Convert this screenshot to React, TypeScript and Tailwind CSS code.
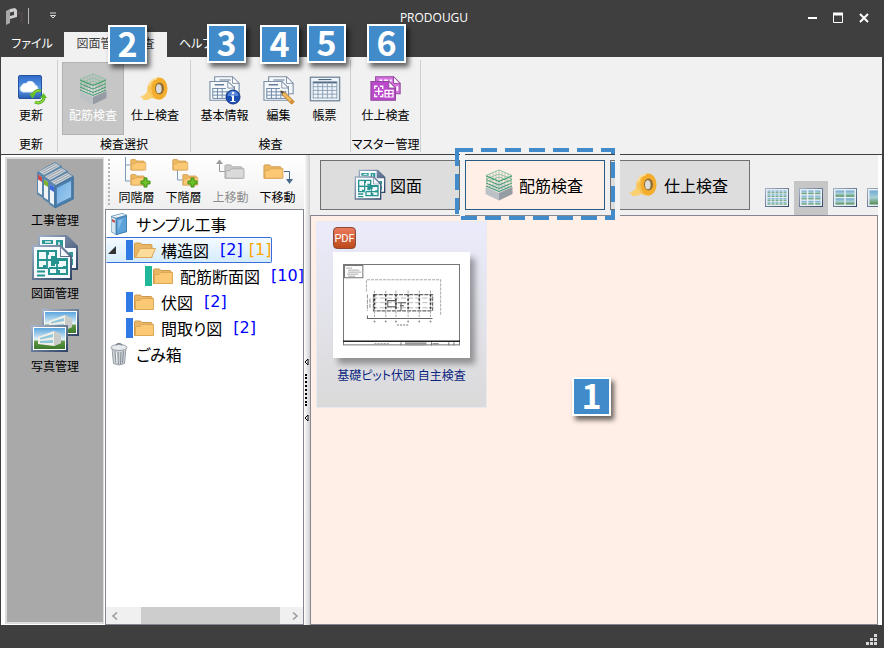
import { useState } from 'react';
import type { ReactNode } from 'react';

type IconProps = { className?: string };

function LogoIcon() {
    return (
        <svg className="w-5 h-5" viewBox="0 0 20 20" aria-hidden="true">
            <path d="M2 5 L6 3 V17 L2 19 Z" fill="#a9a9a9" />
            <path d="M6 3 L11 2 L13 4 V11 L6 13 V10 L10 9 V5.500 L6 6.500 Z" fill="#cfcfcf" />
            <path d="M13 5 L19 6 V18 L16 16 V9 L13 9 Z" fill="#4c4546" />
        </svg>
    );
}

function CloudIcon({ className }: IconProps) {
    return (
        <svg className={className} viewBox="0 0 32 32" aria-hidden="true">
            <defs>
                <linearGradient id="cloudBg" x1="0" y1="0" x2="0" y2="1">
                    <stop offset="0" stopColor="#2f6bc8" />
                    <stop offset="0.6" stopColor="#5c9be6" />
                    <stop offset="1" stopColor="#2a5cb0" />
                </linearGradient>
            </defs>
            <rect x="3.500" y="2.500" width="23" height="23" rx="1.500" fill="url(#cloudBg)" stroke="#2653a0" />
            <path d="M8 19 a3.500 3.500 0 0 1 -1 -6.500 a3.500 3.500 0 0 1 4 -2 a5 5 0 0 1 9 1.500 a3.800 3.800 0 0 1 1 7 Z" fill="#fff" stroke="#dbe8f8" />
            <path d="M18 22 a6 6 0 0 1 8 -4" fill="none" stroke="#3f9b1e" strokeWidth="3" />
            <path d="M18 22 a6 6 0 0 1 8 -4" fill="none" stroke="#8ed63c" strokeWidth="1.800" />
            <path d="M14 20.500 h7 l-3.500 5 Z" fill="#63bd2a" />
            <path d="M29 23 a6 6 0 0 1 -9 6" fill="none" stroke="#3f9b1e" strokeWidth="3" />
            <path d="M29 23 a6 6 0 0 1 -9 6" fill="none" stroke="#8ed63c" strokeWidth="1.800" />
            <path d="M25 25 h7 l-3.500 -5 Z" fill="#63bd2a" />
        </svg>
    );
}

function RebarIcon({ className }: IconProps) {
    return (
        <svg className={className} viewBox="-1 0 32 32" aria-hidden="true">
            <path d="M1.500 18 L15 12 L28.500 18 L15 24 Z" fill="#d8dcdf" />
            <path d="M1.500 18 L15 24 V31.500 L1.500 25 Z" fill="#bcc1c6" />
            <path d="M28.500 18 L15 24 V31.500 L28.500 25 Z" fill="#969ca3" />
            <path d="M3 6V18M6 5V19M9 3V20M12 2V21M15 1V22M18 2V21M21 3V20M24 5V19M27 6V18" fill="none" stroke="#9dafa6" strokeWidth="0.700" />
            <g fill="none" stroke="#3f9a66" strokeWidth="1">
                <path d="M2 6.500 L15 1 L28 6.500 L15 12 Z" stroke="#8fc3a5" />
                <path d="M2 10.500 L15 16 L28 10.500 M2 14 L15 19.500 L28 14 M2 17 L15 22.500 L28 17" />
                <path d="M2 10 L15 5 L28 10 M2 13 L15 8 L28 13" stroke="#8fc3a5" />
                <path d="M2 7 L15 12.500 L28 7" />
            </g>
        </svg>
    );
}

function TapeIcon({ className }: IconProps) {
    return (
        <svg className={className} viewBox="0 -2 32 32" aria-hidden="true">
            <path d="M9 10 C9 17 7 20 0.500 22 L4 23 L3.500 25 C10 25.500 14 23 16 20 Z" fill="#f9cf70" />
            <path d="M8.500 15 C8 7 13 3 20 2.500 L22 24.500 C17 25 13 24 12 20 Z" fill="#f8c458" />
            <ellipse cx="20.500" cy="13.500" rx="8" ry="11" fill="#f2ae2c" />
            <ellipse cx="20.500" cy="13.500" rx="4.500" ry="6" fill="#8f6c36" />
            <ellipse cx="19.800" cy="13.800" rx="2.800" ry="4.500" fill="#dcdcd8" />
            <path d="M10 11 C11 6 14 4 18 3.500" fill="none" stroke="#fbe0a0" strokeWidth="1.500" />
        </svg>
    );
}

// Outline of one page with its top right corner folded down
function Page({ x, y, w, h, fold, fill, stroke }: { x: number; y: number; w: number; h: number; fold: number; fill: string; stroke: string }) {
    return (
        <g>
            <path d={`M${x} ${y} H${x + w - fold} L${x + w} ${y + fold} V${y + h} H${x} Z`} fill={fill} stroke={stroke} strokeWidth="1.200" />
            <path d={`M${x + w - fold} ${y} V${y + fold} H${x + w} Z`} fill="#fff" stroke={stroke} />
        </g>
    );
}

function SheetsIcon({ className }: IconProps) {
    return (
        <svg className={className} viewBox="0 0 34 32" aria-hidden="true">
            <Page x={6} y={3} w={26} h={18} fold={7} fill="#f6f9fc" stroke="#7e90a6" />
            <path d="M11 6.500 H23 M27 13 V19" stroke="#5c7590" strokeWidth="1.200" />
            <Page x={1} y={8} w={26} h={20} fold={7} fill="#f6f9fc" stroke="#7e90a6" />
            <path d="M6 11.500 H16" stroke="#5c7590" strokeWidth="1.500" />
            <path d="M4 15.500H18M4 19H24M4 22.500H24M4 26H24M4 15V26M9 15V26M14 15V26M19 18V26M24 18V26" stroke="#6b86a4" fill="none" />
        </svg>
    );
}

function InfoSheetsIcon({ className }: IconProps) {
    return (
        <span className={`relative block ${className}`}>
            <SheetsIcon className="w-full h-full" />
            <svg className="absolute right-0 bottom-0 w-4 h-4" viewBox="0 0 16 16" aria-hidden="true">
                <circle cx="8" cy="8" r="7" fill="#1c4fb4" stroke="#12388a" />
                <path d="M2.500 7 a5.500 5 0 0 1 11 0 Z" fill="#5585d6" />
                <path d="M6 6.500 H9 V12 H10.500 V13 H5.500 V12 H7 V7.500 H6 Z" fill="#fff" />
                <circle cx="8" cy="4" r="1.300" fill="#fff" />
            </svg>
        </span>
    );
}

function EditSheetsIcon({ className }: IconProps) {
    return (
        <span className={`relative block ${className}`}>
            <SheetsIcon className="w-full h-full" />
            <svg className="absolute right-0 bottom-0 w-4 h-4" viewBox="0 0 16 16" aria-hidden="true">
                <path d="M2 2 L6 3.500 L15 12.500 L12.500 15 L3.500 6 Z" fill="#f2b95a" stroke="#b07d2e" />
                <path d="M1.500 1.500 L5 3 L3 5 Z" fill="#3d4650" />
                <path d="M13 10.500 L15.500 13 L13 15.500 L10.500 13 Z" fill="#d68f3a" />
            </svg>
        </span>
    );
}

function TableIcon({ className }: IconProps) {
    return (
        <svg className={className} viewBox="0 0 34 32" aria-hidden="true">
            <rect x="1.500" y="3.500" width="31" height="25" fill="#eef4f9" stroke="#7b8da1" strokeWidth="1.500" />
            <path d="M10 6 H24" stroke="#34506e" />
            <path d="M4 9 H30" stroke="#4e6883" strokeWidth="2" />
            <path d="M4 13.500H30M4 17.500H30M4 21.500H30M4 25.500H30M4.500 9V26M9.500 9V26M14.500 9V26M19.500 9V26M24.500 9V26M29.500 9V26" stroke="#8b9fb5" fill="none" />
        </svg>
    );
}

function MasterIcon({ className }: IconProps) {
    return (
        <svg className={className} viewBox="0 0 34 32" aria-hidden="true">
            <Page x={6} y={3} w={26} h={18} fold={7} fill="#d673e0" stroke="#93479f" />
            <path d="M10 7H13M15 7H19M21 7H23" stroke="#fff" strokeWidth="2" />
            <path d="M29 13V18" stroke="#fff" strokeWidth="2" />
            <Page x={1} y={8} w={26} h={20} fold={7} fill="#bb49cb" stroke="#93479f" />
            <path d="M8 13H5V16M10.500 13H13.500V16M5 21V24H8M13.500 21V24H10.500M9.250 14.500V22.500M5 18.500H13.500" stroke="#fff" strokeWidth="1.500" fill="none" />
            <path d="M16 17.500H24.500V24.500H16ZM16 21H24.500M20 17.500V24.500" stroke="#fff" strokeWidth="1.300" fill="none" />
        </svg>
    );
}

function BooksIcon({ className }: IconProps) {
    const books = [
        { x: 0, y: 0, label: '#c94a4a' },
        { x: 6, y: 5, label: '#7fb02e' },
        { x: 12, y: 10, label: '#3b66e0' },
    ];
    return (
        <svg className={className} viewBox="0 0 48 48" aria-hidden="true">
            <defs>
                <linearGradient id="bookCover" x1="0" y1="0" x2="1" y2="1">
                    <stop offset="0" stopColor="#6fb0e6" />
                    <stop offset="1" stopColor="#a3cbee" />
                </linearGradient>
            </defs>
            {books.map((b) => (
                <g key={b.x} transform={`translate(${b.x} ${b.y})`}>
                    <path d="M6 11 L24 1 L31 5 V28 L12 37 L6 33 Z" fill="#5f88a8" />
                    <path d="M8 10.500 L24 2 L29 5 L13 14 Z" fill="#cfd4d9" />
                    <path d="M10 11 L25 3 M12 12.500 L27 4.500" stroke="#98a2ac" />
                    <path d="M6 11 L12 14.500 V37 L6 33 Z" fill="#5a86ab" />
                    <path d="M7 13.500 L11 16 V34 L7 31.500 Z" fill="#eef3f7" />
                    <path d="M7 13.500 L11 16 V21 L7 18.500 Z" fill={b.label} />
                </g>
            ))}
            <path d="M24 25 L42 16 V38 L24 47 Z" fill="#4d80ae" stroke="#42719b" />
            <path d="M26 27 L40 20 V36 L26 43 Z" fill="url(#bookCover)" />
        </svg>
    );
}

function DrawingIcon({ className }: IconProps) {
    return (
        <svg className={className} viewBox="0 0 48 48" aria-hidden="true">
            <defs>
                <linearGradient id="drawEdge" x1="0" y1="0" x2="1" y2="1">
                    <stop offset="0" stopColor="#9fb0c6" />
                    <stop offset="1" stopColor="#2c4164" />
                </linearGradient>
            </defs>
            <path d="M7 1 H36 L47 12 V36 H7 Z" fill="url(#drawEdge)" />
            <path d="M9 3 H34 V14 H45 V34 H9 Z" fill="#f6fafc" />
            <path d="M11 6H22V10H11ZM25 6H32V13H25ZM38 18H42V31H38Z" fill="#2e9a98" />
            <path d="M14 8H20M28 8V12M38 24H42" stroke="#e8f6f6" strokeWidth="1.500" />
            <path d="M1 11 H30 L41 22 V46 H1 Z" fill="url(#drawEdge)" />
            <path d="M3 13 H29 V23 H39 V44 H3 Z" fill="#f6fafc" />
            <path d="M30 14 V22 H38 Z" fill="#f6fafc" />
            <path d="M6 16H26V24H37V41H17V35H6Z" fill="#279391" />
            <path d="M8 18H15V21H18V18H24V22H20V25H24V27H20V32H24V30H28V27H35V32H32V35H35V39H29V36H26V39H19V34H15V31H12V33H8V27H14V25H8Z" fill="#f1fafa" />
            <path d="M16 17V34M7 26H36M26 25V40M18 34H36" stroke="#279391" strokeWidth="1.800" />
            <path d="M6 37.500H14M6 41.500H14" stroke="#279391" strokeWidth="2" />
        </svg>
    );
}

function PhotoIcon({ className }: IconProps) {
    return (
        <svg className={className} viewBox="0 0 48 48" aria-hidden="true">
            <defs>
                <linearGradient id="photoView" x1="0" y1="0" x2="0" y2="1">
                    <stop offset="0" stopColor="#5aa5dd" />
                    <stop offset="0.550" stopColor="#e3f1f8" />
                    <stop offset="0.650" stopColor="#5f9442" />
                    <stop offset="1" stopColor="#3d7a2c" />
                </linearGradient>
                <linearGradient id="photoEdge" x1="0" y1="0" x2="1" y2="1">
                    <stop offset="0" stopColor="#a9b8cc" />
                    <stop offset="1" stopColor="#2b4163" />
                </linearGradient>
            </defs>
            {[{ x: 11, y: 2 }, { x: 0, y: 18 }].map((p) => (
                <g key={p.x} transform={`translate(${p.x} ${p.y})`}>
                    <rect width="37" height="27" fill="url(#photoEdge)" />
                    <rect x="2" y="2" width="33" height="23" fill="#fff" />
                    <rect x="3" y="3" width="31" height="21" fill="url(#photoView)" />
                    <path d="M7 12 L23 6 L30 10 V18 L23 21 L7 19 Z" fill="#efefe6" />
                    <path d="M9 13 L22 9 V12 L9 14.500 Z M9 16 L22 15 V18 L9 18 Z" fill="#8ec6dd" />
                    <path d="M23 6 L30 10 V18 L23 21 Z" fill="#c9cbc9" />
                </g>
            ))}
        </svg>
    );
}

function FolderIcon({ className, open }: IconProps & { open?: boolean }) {
    return (
        <svg className={className} viewBox="0 0 24 20" aria-hidden="true">
            <path d="M1.500 17.500 V4 Q1.500 3 3 3 H7.500 L9 4.500 H18 Q19 4.500 19 6 V17.500 Z" fill="#e9b666" stroke="#cf9a4c" />
            {open ? (
                <path d="M2.500 17.500 L7 8.500 H22.500 L18.500 17.500 Z" fill="#fddb9b" stroke="#dca759" />
            ) : (
                <path d="M2.500 17.500 V8.500 H7 L9 6.500 H20.500 V17.500 Z" fill="#fbc974" stroke="#dca759" />
            )}
        </svg>
    );
}

function BookIcon({ className }: IconProps) {
    return (
        <svg className={className} viewBox="0 0 18 24" aria-hidden="true">
            <path d="M1 4 L12 1 L17 3 V20 L6 23 L1 20 Z" fill="#5b91bb" />
            <path d="M2 4.500 L12 1.800 L15.500 3 L6 5.800 Z" fill="#eef2f5" />
            <path d="M1.500 5 L5.500 7 V22 L1.500 19.500 Z" fill="#dbe7f0" />
            <path d="M2 7 L5 8.500 V11 L2 9.500 Z" fill="#c65353" />
            <path d="M6.500 7 L16.500 4 V19.500 L6.500 22.500 Z" fill="#5da3da" stroke="#4280b0" />
            <path d="M8 8.500 L13 7 L8 18 Z" fill="#84bce8" />
        </svg>
    );
}

function TrashIcon({ className }: IconProps) {
    return (
        <svg className={className} viewBox="0 0 18 24" aria-hidden="true">
            <path d="M2 6 L3.500 21.500 Q9 24.500 14.500 21.500 L16 6 Z" fill="#cdd2d7" stroke="#98a0a8" />
            <path d="M5 9L6 21M8 10L8.300 22M11 10L10.500 22M13.500 9L12.500 21" stroke="#848d96" />
            <path d="M6.300 10L7 21" stroke="#f4f6f8" />
            <ellipse cx="9" cy="5.500" rx="8" ry="3" fill="#e8ebee" stroke="#98a0a8" />
            <path d="M6 3 Q9 0 12 3" fill="none" stroke="#7e8790" strokeWidth="1.500" />
        </svg>
    );
}

// Folder pictures of the tree toolbar; the lines tell where the new or moved folder goes
function LevelIcon({ kind }: { kind: 'same' | 'child' | 'up' | 'down' }) {
    const folder = (x: number, y: number, s: number, muted = false) => (
        <g transform={`translate(${x} ${y}) scale(${s})`}>
            <path d="M1 16 V3 Q1 2 2 2 H7 L9 4 H18 Q19 4 19 5 V16 Z" fill={muted ? '#c9c9c9' : '#edb75f'} stroke={muted ? '#adadad' : '#cf9a4c'} />
            <path d="M2 16 V8 H6 L8 6 H21 V16 Z" fill={muted ? '#dadada' : '#fbc974'} stroke={muted ? '#adadad' : '#dca759'} />
        </g>
    );
    const plus = <path d="M20 24 H23 V21 H26 V24 H29 V27 H26 V30 H23 V27 H20 Z" fill="#6cc227" stroke="#3d8f17" />;
    return (
        <svg className="w-8 h-8" viewBox="0 0 32 32" aria-hidden="true">
            {kind === 'same' && (
                <>
                    <path d="M4.500 0 V24 H9 M4.500 8 H9" fill="none" stroke="#7b9cbd" />
                    {folder(9, 1, 0.750)}
                    {folder(9, 16, 0.750)}
                    {plus}
                </>
            )}
            {kind === 'child' && (
                <>
                    <path d="M9.500 13 V23 H14" fill="none" stroke="#7b9cbd" />
                    {folder(4, 1, 0.750)}
                    {folder(14, 16, 0.750)}
                    {plus}
                </>
            )}
            {kind === 'up' && (
                <>
                    <path d="M10 14.500 H4.500 V5" fill="none" stroke="#9a9a9a" />
                    <path d="M1 7 L4.500 2.500 L8 7 Z" fill="#9a9a9a" />
                    {folder(9, 6, 0.950, true)}
                </>
            )}
            {kind === 'down' && (
                <>
                    {folder(1, 6, 0.950)}
                    <path d="M22 14.500 H27.500 V24" fill="none" stroke="#46698c" />
                    <path d="M24 22 L27.500 27 L31 22 Z" fill="#46698c" />
                </>
            )}
        </svg>
    );
}

function ViewIcon({ cols, rows }: { cols: number; rows: number }) {
    const gap = cols > 3 ? 1 : 1.5;
    const w = (19 - (cols - 1) * gap) / cols;
    const h = (14 - (rows - 1) * gap) / rows;
    const cells = Array.from({ length: cols * rows }, (_, i) => ({
        x: 2.5 + (i % cols) * (w + gap),
        y: 2.5 + Math.floor(i / cols) * (h + gap),
    }));
    return (
        <svg className="w-6 h-5 shrink-0" viewBox="0 0 24 20" aria-hidden="true">
            <defs>
                <linearGradient id="viewEdge" x1="0" y1="0" x2="1" y2="1">
                    <stop offset="0" stopColor="#a5b3c6" />
                    <stop offset="1" stopColor="#33466a" />
                </linearGradient>
                <linearGradient id="viewCell" x1="0" y1="0" x2="0" y2="1">
                    <stop offset="0" stopColor="#6fa8d4" />
                    <stop offset="0.500" stopColor="#a8cfd6" />
                    <stop offset="1" stopColor="#4f8c50" />
                </linearGradient>
            </defs>
            <rect x="0" y="0" width="24" height="19" fill="url(#viewEdge)" />
            <rect x="1" y="1" width="22" height="17" fill="#e6edf3" />
            {cells.map(({ x, y }) => (
                <rect key={`${x}-${y}`} x={x} y={y} width={w} height={h} fill="url(#viewCell)" />
            ))}
        </svg>
    );
}

function PlanThumb() {
    const columns = [31, 42, 52, 64, 75, 86];
    return (
        <svg className="block w-full" viewBox="0 0 115 81" role="img" aria-label="基礎ピット伏図">
            <rect x="0.500" y="0.500" width="114" height="79" fill="#fff" stroke="#777" />
            <rect x="1.500" y="1.500" width="18" height="12" fill="#fff" stroke="#777" />
            <path d="M3 4H9M5 6H16M5 8H18M4 10H15M5 12H12" stroke="#999" strokeWidth="0.800" />
            <path d="M23 27 V15.500 H96 V50" fill="none" stroke="#aaa" strokeDasharray="3 1" />
            <rect x="30" y="30" width="58" height="16" fill="none" stroke="#666" strokeWidth="1.200" strokeDasharray="4 1" />
            <path d="M29 33.500H89M29 38H89M29 43H89" stroke="#aaa" strokeWidth="0.800" strokeDasharray="5 2" />
            {columns.map((x) => (
                <g key={x}>
                    <path d={`M${x} 26 V52`} stroke="#aaa" strokeDasharray="3 1" />
                    <path d={`M${x} 30 V46`} stroke="#333" strokeWidth="1.500" strokeDasharray="2 2" />
                    <circle cx={x} cy="56.500" r="0.900" fill="#888" />
                </g>
            ))}
            <path d="M44 36H52V42H44ZM54 38H62M56 41H60M57 38V46" stroke="#555" fill="none" />
            <path d="M24 30V46M26.500 34V44" stroke="#999" fill="none" strokeDasharray="4 1" />
            <path d="M24 50.500V53.500H88" stroke="#666" fill="none" />
            <path d="M53 60H65" stroke="#777" strokeDasharray="2 1" />
            <path d="M0 76H115" stroke="#222" strokeWidth="1.500" />
            <path d="M31 78.500H45" stroke="#888" strokeDasharray="2 1" />
            <rect x="61" y="77" width="21" height="3" fill="#999" />
            <path d="M57 77V80M87 77V80M104 77V80M109 77V80M88 78.500H94" stroke="#777" />
        </svg>
    );
}

// Numbered marker laid over the window
function Marker({ n, className }: { n: number; className: string }) {
    return (
        <span
            className={`absolute z-20 flex items-center justify-center w-[39px] h-[39px] pb-1 border-2 border-white bg-[#428bca] text-white text-[34px] leading-none font-bold shadow-[3px_4px_5px_rgba(0,0,0,0.6)] pointer-events-none ${className}`}
        >
            {n}
        </span>
    );
}

function RibbonGroup({ label, className, children }: { label: string; className: string; children: ReactNode }) {
    return (
        <section className={`flex flex-col border-r border-[#cfcfcf] ${className}`}>
            <div className="flex-1 flex justify-center pt-0.5">{children}</div>
            <h2 className="text-xs leading-[18px] text-center whitespace-nowrap">{label}</h2>
        </section>
    );
}

function RibbonButton({ label, icon, active, className }: { label: string; icon: ReactNode; active?: boolean; className: string }) {
    return (
        <button
            className={`flex flex-col items-center pt-2.5 h-[73px] border text-xs leading-4 whitespace-nowrap ${active ? 'bg-[#c6c6c6] border-[#b2b2b2] text-white' : 'border-transparent hover:bg-[#dcdcdc]'} ${className}`}
        >
            {icon}
            <span className="mt-0.5">{label}</span>
        </button>
    );
}

const sideItems = [
    { label: '工事管理', icon: BooksIcon },
    { label: '図面管理', icon: DrawingIcon },
    { label: '写真管理', icon: PhotoIcon },
];

const levelButtons = [
    { label: '同階層', kind: 'same' },
    { label: '下階層', kind: 'child' },
    { label: '上移動', kind: 'up' },
    { label: '下移動', kind: 'down' },
] as const;

const folders = [
    { name: '構造図', count: 2, alert: 1, open: true, child: false },
    { name: '配筋断面図', count: 10, alert: 0, open: false, child: true },
    { name: '伏図', count: 2, alert: 0, open: false, child: false },
    { name: '間取り図', count: 2, alert: 0, open: false, child: false },
];

const mainTabs = [
    { label: '図面', icon: DrawingIcon },
    { label: '配筋検査', icon: RebarIcon },
    { label: '仕上検査', icon: TapeIcon },
];

const views = [
    { name: '極小', cols: 5, rows: 4 },
    { name: '小', cols: 3, rows: 3 },
    { name: '中', cols: 2, rows: 2 },
    { name: '大', cols: 1, rows: 1 },
];

export default function App() {
    const [selected, setSelected] = useState('構造図');
    const [tab, setTab] = useState('配筋検査');
    const [view, setView] = useState('小');

    return (
        <div className="relative min-h-screen flex flex-col bg-[#3f3f3f] text-black font-['Noto_Sans_CJK_JP',sans-serif] [font-feature-settings:'palt'] overflow-hidden">
            {/* Title bar */}
            <header className="relative h-8 flex items-center justify-between pl-1 pr-3 text-white">
                <div className="flex items-center">
                    <LogoIcon />
                    <span className="ml-1 w-px h-4 bg-[#b5b5b5]" />
                    <button className="ml-5" aria-label="クイックアクセス">
                        <svg className="w-2 h-2" viewBox="0 0 8 8">
                            <path d="M1 1H7M1.500 3.500H6.500L4 6Z" stroke="#ddd" fill="none" />
                        </svg>
                    </button>
                </div>
                <h1 className="absolute inset-x-0 top-2 pr-4 text-center text-xs leading-5 pointer-events-none font-['Open_Sans',sans-serif]">PRODOUGU</h1>
                <div className="flex items-center gap-2.5 pt-1">
                    <button aria-label="最小化">
                        <svg className="w-4 h-4" viewBox="0 0 16 16"><path d="M4 8H13" stroke="#fff" strokeWidth="2" /></svg>
                    </button>
                    <button aria-label="最大化">
                        <svg className="w-4 h-4" viewBox="0 0 16 16"><path d="M3.500 4V12.500H12.500V4M3 4H13" stroke="#fff" fill="none" /><path d="M3 4H13" stroke="#fff" strokeWidth="3" /></svg>
                    </button>
                    <button aria-label="閉じる">
                        <svg className="w-4 h-4" viewBox="0 0 16 16"><path d="M4 4L12 12M12 4L4 12" stroke="#fff" strokeWidth="2" /></svg>
                    </button>
                </div>
            </header>

            {/* Ribbon tabs */}
            <nav className="flex h-[25px] text-xs text-white">
                <button className="w-16 pb-1 whitespace-nowrap">ファイル</button>
                <button className="w-[103px] pb-1 bg-[#f1f1f1] text-[#3f3f3f] whitespace-nowrap">図面管理・検査</button>
                <button className="px-3 pb-1 whitespace-nowrap">ヘルプ</button>
            </nav>

            {/* Ribbon */}
            <div className="flex h-[97px] ml-px mr-0.5 pt-[3px] pb-0.5 bg-[#f1f1f1]">
                <RibbonGroup label="更新" className="w-[57px] pl-1">
                    <RibbonButton label="更新" className="w-12" icon={<CloudIcon className="w-8 h-8" />} />
                </RibbonGroup>
                <RibbonGroup label="検査選択" className="w-[133px]">
                    <RibbonButton label="配筋検査" active className="w-[62px]" icon={<RebarIcon className="w-8 h-8" />} />
                    <RibbonButton label="仕上検査" className="w-[62px]" icon={<TapeIcon className="w-8 h-8" />} />
                </RibbonGroup>
                <RibbonGroup label="検査" className="w-[160px]">
                    <RibbonButton label="基本情報" className="w-[60px]" icon={<InfoSheetsIcon className="w-8 h-8" />} />
                    <RibbonButton label="編集" className="w-12" icon={<EditSheetsIcon className="w-8 h-8" />} />
                    <RibbonButton label="帳票" className="w-11" icon={<TableIcon className="w-8 h-8" />} />
                </RibbonGroup>
                <RibbonGroup label="マスター管理" className="w-[70px]">
                    <RibbonButton label="仕上検査" className="w-[60px]" icon={<MasterIcon className="w-8 h-8" />} />
                </RibbonGroup>
            </div>

            <div className="flex-1 flex mt-px ml-px mr-0.5 pl-1 pr-1 bg-white">
                {/* Category bar */}
                <nav className="w-[99px] mt-0.5 mb-px mr-px pt-0.5 flex flex-col items-center gap-1.5 border-2 border-r border-[#dcdcdc] bg-[#a9a9a9]">
                    {sideItems.map(({ label, icon: Icon }) => (
                        <button key={label} className="flex flex-col items-center gap-[3px] text-xs leading-4">
                            <Icon className="w-12 h-12" />
                            {label}
                        </button>
                    ))}
                </nav>

                {/* Folder tree */}
                <aside className="w-[199px] flex flex-col">
                    <div className="h-[54px] flex pl-0.5 bg-linear-to-b from-white to-[#efefef]">
                        <span className="my-1 ml-px mr-[3px] border-l-2 border-dotted border-[#b5b5b5]" />
                        {levelButtons.map(({ label, kind }) => (
                            <button
                                key={label}
                                disabled={kind === 'up'}
                                className="w-[47px] pt-0.5 flex flex-col items-center text-xs leading-4 whitespace-nowrap disabled:text-[#8d8d8d]"
                            >
                                <LevelIcon kind={kind} />
                                {label}
                            </button>
                        ))}
                    </div>
                    <div className="flex-1 flex flex-col border border-[#828790] bg-white">
                        <ul className="flex-1 pt-px text-base overflow-hidden">
                            <li>
                                <button className="flex items-center h-[26px] pl-1 gap-2 whitespace-nowrap">
                                    <BookIcon className="w-[18px] h-6" />
                                    サンプル工事
                                </button>
                            </li>
                            {folders.map((f) => (
                                <li key={f.name}>
                                    <button
                                        onClick={() => setSelected(f.name)}
                                        className={`flex items-center h-[26px] border whitespace-nowrap ${f.child ? 'pl-[38px]' : f.open ? 'pl-px' : 'pl-[19px]'} ${selected === f.name ? 'border-[#3a6edb] border-l-transparent rounded-r-xs bg-linear-to-b from-[#f3faff] to-[#d5ecfb]' : 'border-transparent'}`}
                                    >
                                        {f.open && (
                                            <svg className="w-2 h-2 mr-2.5" viewBox="0 0 8 8" aria-hidden="true">
                                                <path d="M8 0V8H0Z" fill="#333" />
                                            </svg>
                                        )}
                                        <span className={`w-[7px] h-5 ${f.child ? 'bg-[#1fb89a]' : 'bg-[#2f7ae5]'}`} />
                                        <FolderIcon open={f.open} className="w-6 h-5 mr-1" />
                                        <span>{f.name}</span>
                                        <span className="ml-[11px] text-[#0000ff] font-['DejaVu_Sans',sans-serif]">[{f.count}]</span>
                                        {f.alert > 0 && (
                                            <span className="ml-1.5 text-[#ffa500] font-['DejaVu_Sans',sans-serif]">[{f.alert}]</span>
                                        )}
                                    </button>
                                </li>
                            ))}
                            <li>
                                <button className="flex items-center h-[26px] pl-1 gap-2 whitespace-nowrap">
                                    <TrashIcon className="w-[18px] h-6" />
                                    ごみ箱
                                </button>
                            </li>
                        </ul>
                        <div className="flex h-[17px] bg-[#f0f0f0]">
                            <button className="w-[17px] flex items-center justify-center" aria-label="左へスクロール">
                                <svg className="w-2 h-2" viewBox="0 0 8 8"><path d="M6 0.500L2 4L6 7.500" fill="none" stroke="#999" strokeWidth="1.500" /></svg>
                            </button>
                            <span className="flex-1 ml-[18px] mr-1.5 bg-[#cdcdcd]" />
                            <button className="w-[17px] flex items-center justify-center" aria-label="右へスクロール">
                                <svg className="w-2 h-2" viewBox="0 0 8 8"><path d="M2 0.500L6 4L2 7.500" fill="none" stroke="#999" strokeWidth="1.500" /></svg>
                            </button>
                        </div>
                    </div>
                </aside>

                {/* Splitter */}
                <div className="w-1.5 flex flex-col items-start justify-center gap-2 bg-linear-to-r from-white to-[#cfcfcf]">
                    <svg className="w-1.5 h-2" viewBox="0 0 6 8"><path d="M4 1V7L1 4Z" fill="#fff" stroke="#000" /></svg>
                    <span className="h-8 ml-px border-l-2 border-dotted border-black" />
                    <svg className="w-1.5 h-2" viewBox="0 0 6 8"><path d="M4 1V7L1 4Z" fill="#fff" stroke="#000" /></svg>
                </div>

                {/* Inspection pane */}
                <main className="flex-1 min-w-0 flex flex-col bg-[#f0f0f0]">
                    <div className="h-[60px] flex items-end overflow-hidden pl-2.5">
                        <div className="flex gap-[5px] mb-[5px]">
                            {mainTabs.map(({ label, icon: Icon }) => (
                                <button
                                    key={label}
                                    onClick={() => setTab(label)}
                                    className={`w-[140px] h-[50px] pr-1 flex items-center justify-center gap-1 border text-base whitespace-nowrap ${tab === label ? 'bg-[#ffefe6] border-[#2a5a82]' : 'bg-[#dddddd] border-[#707070]'}`}
                                >
                                    <Icon className="w-8 h-8" />
                                    {label}
                                </button>
                            ))}
                        </div>
                        <div className="flex ml-2.5">
                            {views.map((v) => (
                                <button
                                    key={v.name}
                                    aria-label={v.name}
                                    onClick={() => setView(v.name)}
                                    className={`w-[34px] h-[34px] shrink-0 flex items-center justify-center ${view === v.name ? 'bg-[#c6c6c6]' : ''}`}
                                >
                                    <ViewIcon cols={v.cols} rows={v.rows} />
                                </button>
                            ))}
                        </div>
                    </div>
                    <div className="flex-1 p-[5px] border border-[#828790] bg-[#ffefe6]">
                        <figure className="w-[171px] h-[187px] px-4 pt-[5px] border border-[#e9e9f2] bg-linear-to-b from-[#ebebfb] to-[#dadada]">
                            <span className="flex items-center justify-center w-[23px] h-[22px] rounded-sm border border-[#8a4a3a] bg-linear-to-b from-[#ec7a5c] to-[#bd4a17] text-white text-[11px] leading-none font-['Roboto',sans-serif]">
                                PDF
                            </span>
                            <div className="w-[137px] mt-[3px] px-2.5 py-3 bg-white shadow-[5px_6px_6px_rgba(0,0,0,0.35)]">
                                <PlanThumb />
                            </div>
                            <figcaption className="mt-[9px] text-xs leading-4 text-center text-[#0b2580] whitespace-nowrap">基礎ピット伏図 自主検査</figcaption>
                        </figure>
                    </div>
                </main>
            </div>

            {/* Status bar */}
            <footer className="h-[23px] flex items-end justify-end pr-1.5 pb-0.5">
                <svg className="w-3 h-3" viewBox="0 0 12 12" aria-hidden="true">
                    <path d="M8 0h3v3h-3zM4 4h3v3h-3zM8 4h3v3h-3zM0 8h3v3h-3zM4 8h3v3h-3zM8 8h3v3h-3z" fill="#d8d8d8" />
                </svg>
            </footer>

            {/* Guide marks over the window */}
            <svg className="absolute z-10 left-[455px] top-[148px] w-[166px] h-[73px] pointer-events-none" viewBox="0 0 166 73" aria-hidden="true">
                <path d="M7.500 5V68M162.500 0V70" stroke="#f3f2f2" strokeWidth="5" />
                <rect x="2" y="2" width="156" height="68" fill="none" stroke="#428bca" strokeWidth="4" strokeDasharray="16 8" />
            </svg>
            <Marker n={2} className="left-[108px] top-[25px]" />
            <Marker n={3} className="left-[207px] top-[24px]" />
            <Marker n={4} className="left-[260px] top-[25px]" />
            <Marker n={5} className="left-[307px] top-[24px]" />
            <Marker n={6} className="left-[367px] top-[24px]" />
            <Marker n={1} className="left-[572px] top-[377px]" />
        </div>
    );
}
